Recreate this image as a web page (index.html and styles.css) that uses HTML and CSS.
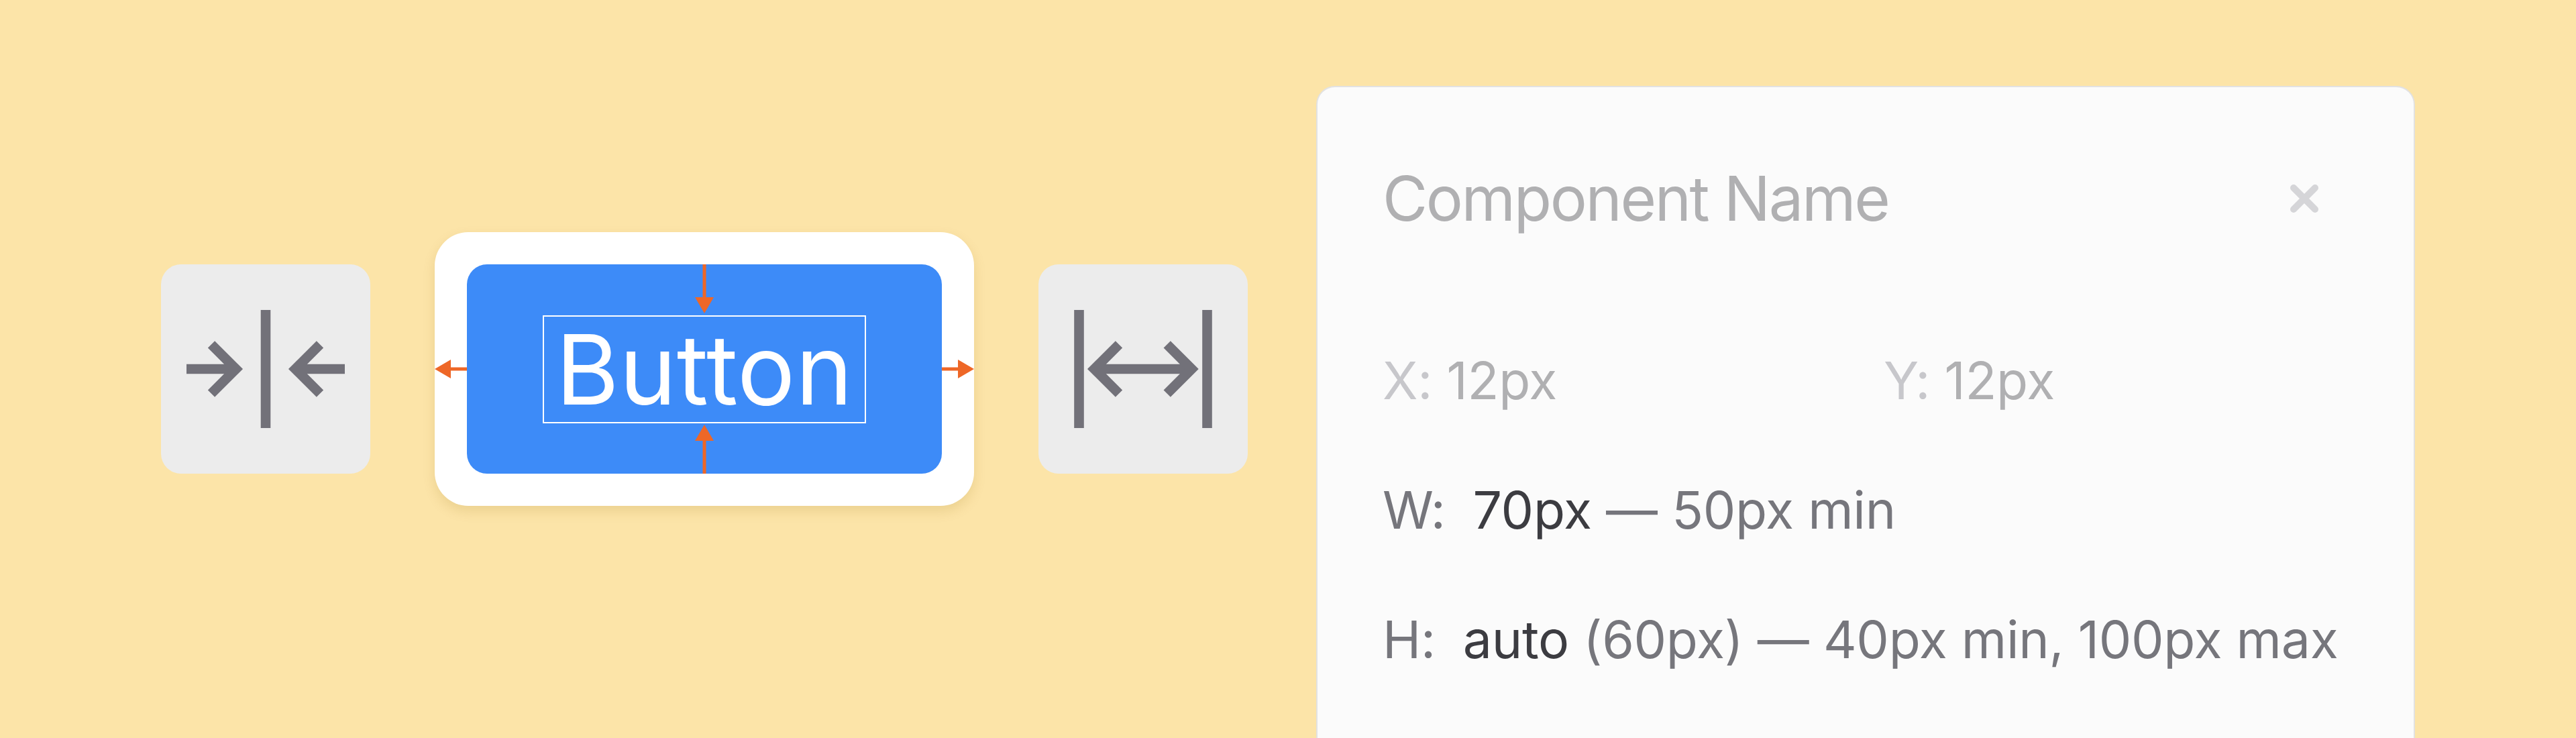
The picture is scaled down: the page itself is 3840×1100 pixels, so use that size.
FILE: index.html
```html
<!DOCTYPE html>
<html lang="en">
<head>
<meta charset="utf-8">
<title>Component sizing</title>
<link rel="stylesheet" href="styles.css">
</head>
<body>
<main class="stage">
  <section class="demo">
    <div class="tool">
      <svg class="tool-icon" viewBox="0 0 312 312" width="312" height="312" aria-hidden="true">
        <g fill="none" stroke="#727179" stroke-width="14.6" stroke-linejoin="miter" stroke-miterlimit="4">
          <line x1="156" y1="68" x2="156" y2="244"/>
          <line x1="38" y1="156" x2="110" y2="156"/>
          <polyline points="75,119.3 111.7,156 75,192.7"/>
          <line x1="274" y1="156" x2="202" y2="156"/>
          <polyline points="237,119.3 200.3,156 237,192.7"/>
        </g>
      </svg>
    </div>

    <div class="frame">
      <div class="button">
        <span class="label">Button</span>
      </div>
      <svg class="guides" viewBox="0 0 804 408" width="804" height="408" aria-hidden="true">
        <g stroke="#ee6727" stroke-width="5" fill="none">
          <line x1="402" y1="48" x2="402" y2="99"/>
          <line x1="402" y1="360" x2="402" y2="309"/>
          <line x1="48" y1="204" x2="22" y2="204"/>
          <line x1="756" y1="204" x2="782" y2="204"/>
        </g>
        <g fill="#ee6727">
          <polygon points="388,97 416,97 402,121"/>
          <polygon points="388,311 416,311 402,287"/>
          <polygon points="24,190 24,218 0,204"/>
          <polygon points="780,190 780,218 804,204"/>
        </g>
      </svg>
    </div>

    <div class="tool">
      <svg class="tool-icon" viewBox="0 0 312 312" width="312" height="312" aria-hidden="true">
        <g fill="none" stroke="#727179" stroke-width="14.6" stroke-linejoin="miter" stroke-miterlimit="4">
          <line x1="60.5" y1="68" x2="60.5" y2="244"/>
          <line x1="251.5" y1="68" x2="251.5" y2="244"/>
          <line x1="85" y1="156" x2="227" y2="156"/>
          <polyline points="120,119.3 83.3,156 120,192.7"/>
          <polyline points="191.7,119.3 228.4,156 191.7,192.7"/>
        </g>
      </svg>
    </div>
  </section>

  <aside class="card">
    <header class="card-head">
      <h1 class="title">Component Name</h1>
      <span class="close" aria-label="Close">
        <svg viewBox="0 0 42 42" width="42" height="42" aria-hidden="true">
          <g stroke="#d5d5d8" stroke-width="10" stroke-linecap="round">
            <line x1="5" y1="5" x2="37" y2="37"/>
            <line x1="37" y1="5" x2="5" y2="37"/>
          </g>
        </svg>
      </span>
    </header>

    <div class="coords">
      <p class="row dim"><span class="key">X:</span> 12px</p>
      <p class="row dim"><span class="key">Y:</span> 12px</p>
    </div>

    <p class="row size"><span class="key2">W:</span><span class="val">70px</span> — 50px min</p>
    <p class="row size"><span class="key2">H:</span><span class="val">auto</span> (60px) — 40px min, 100px max</p>
  </aside>
</main>
</body>
</html>
```

FILE: styles.css
```css
* {
  box-sizing: border-box;
}

html, body {
  margin: 0;
  padding: 0;
}

body {
  background: #fce4a8;
  font-family: Inter, "Noto Sans", "Liberation Sans", sans-serif;
  width: 3840px;
  height: 1100px;
  overflow: hidden;
}

.stage {
  display: flex;
  align-items: flex-start;
  height: 1100px;
  padding-left: 240px;
}

.demo {
  display: flex;
  align-items: center;
  gap: 96px;
  height: 1100px;
}

.tool {
  width: 312px;
  height: 312px;
  border-radius: 30px;
  background: #ececec;
  display: flex;
}

.tool-icon {
  display: block;
}

.frame {
  position: relative;
  width: 804px;
  height: 408px;
  padding: 48px;
  background: #ffffff;
  border-radius: 50px;
  box-shadow: 0 8px 18px rgba(150, 110, 20, 0.16);
}

.button {
  width: 708px;
  height: 312px;
  background: #3d8bf8;
  border-radius: 30px;
  display: flex;
  align-items: center;
  justify-content: center;
}

.label {
  display: block;
  width: 482px;
  height: 161px;
  border: 2px solid #ffffff;
  color: #ffffff;
  font-size: 144px;
  line-height: 157px;
  text-align: center;
  letter-spacing: 0.5px;
}

.guides {
  position: absolute;
  left: 0;
  top: 0;
  display: block;
}

.card {
  margin-left: 102px;
  margin-top: 128px;
  width: 1638px;
  height: 1100px;
  background: #fbfbfb;
  border: 2px solid #e2e2e2;
  border-radius: 28px;
  padding: 111px 142px 0 97px;
}

.card-head {
  display: flex;
  align-items: center;
  justify-content: space-between;
}

.title {
  margin: 0;
  font-size: 92px;
  font-weight: 400;
  line-height: 110px;
  color: #b0b0b2;
  letter-spacing: -2.4px;
}

.close {
  display: flex;
  width: 42px;
  height: 42px;
}

.coords {
  display: grid;
  grid-template-columns: 747px 1fr;
  margin-top: 170px;
}

.row {
  margin: 0;
  font-size: 77px;
  line-height: 92px;
  white-space: nowrap;
  letter-spacing: -0.3px;
}

.dim {
  color: #b0b0b2;
}

.dim .key {
  color: #c7c7cb;
}

.size {
  color: #76767c;
  margin-top: 101px;
}

.key2 {
  margin-right: 41px;
}

.val {
  color: #3c3c41;
}
```
